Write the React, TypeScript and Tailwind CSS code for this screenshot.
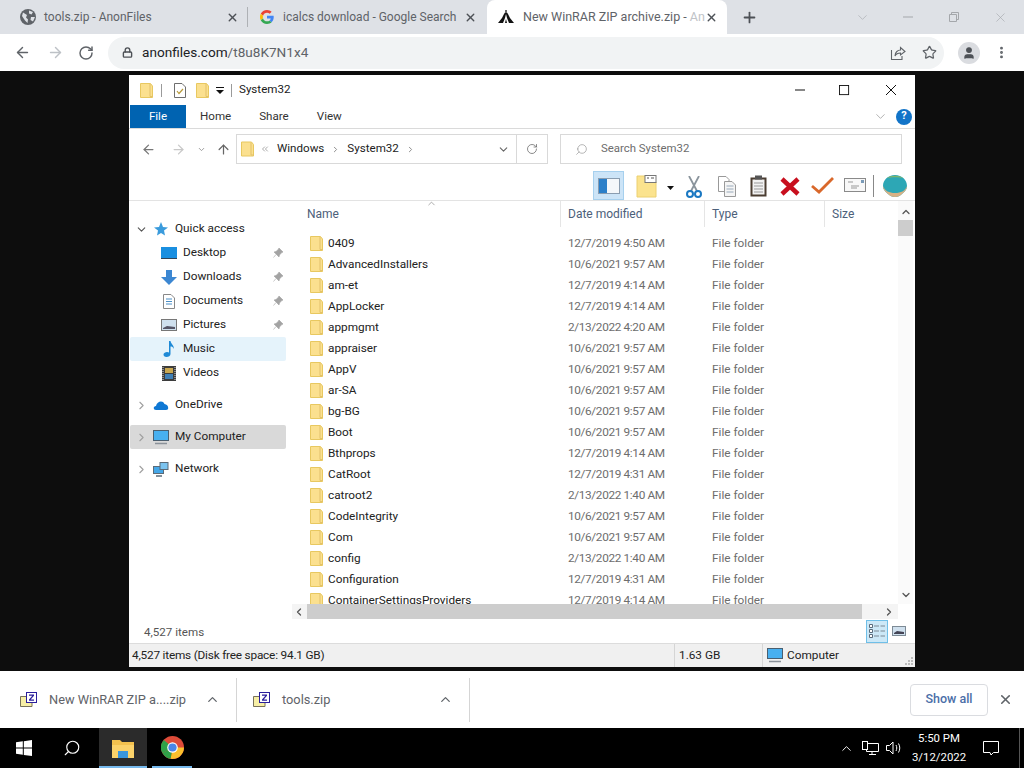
import React from 'react';
import {
  ArrowLeft,
  ArrowRight,
  ArrowUp,
  ChevronDown,
  ChevronLeft,
  ChevronRight,
  ChevronsLeft,
  ChevronUp,
  EllipsisVertical,
  Lock,
  Plus,
  RotateCw,
  Search,
  Star,
  User,
  X,
} from 'lucide-react';

const files = [
  ['0409', '12/7/2019 4:50 AM'],
  ['AdvancedInstallers', '10/6/2021 9:57 AM'],
  ['am-et', '12/7/2019 4:14 AM'],
  ['AppLocker', '12/7/2019 4:14 AM'],
  ['appmgmt', '2/13/2022 4:20 AM'],
  ['appraiser', '10/6/2021 9:57 AM'],
  ['AppV', '10/6/2021 9:57 AM'],
  ['ar-SA', '10/6/2021 9:57 AM'],
  ['bg-BG', '10/6/2021 9:57 AM'],
  ['Boot', '10/6/2021 9:57 AM'],
  ['Bthprops', '12/7/2019 4:14 AM'],
  ['CatRoot', '12/7/2019 4:31 AM'],
  ['catroot2', '2/13/2022 1:40 AM'],
  ['CodeIntegrity', '10/6/2021 9:57 AM'],
  ['Com', '10/6/2021 9:57 AM'],
  ['config', '2/13/2022 1:40 AM'],
  ['Configuration', '12/7/2019 4:31 AM'],
  ['ContainerSettingsProviders', '12/7/2019 4:14 AM'],
];

function Folder({ className = 'w-[13px] h-[15px]' }: { className?: string }) {
  return (
    <svg viewBox="0 0 13 15" className={className}>
      <path d="M0.5 0.5H10.5L12.5 3V14.5H0.5Z" fill="#fbe08f" stroke="#e8c860" />
      <path d="M10 1V13.5H12.5" fill="none" stroke="#e2c16a" />
    </svg>
  );
}

function GoogleG() {
  return (
    <svg viewBox="0 0 48 48" className="w-[14px] h-[14px]">
      <path fill="#ea4335" d="M24 9.5c3.5 0 6.7 1.3 9.1 3.5l6.8-6.8C35.8 2.4 30.3 0 24 0 14.6 0 6.5 5.4 2.6 13.2l7.9 6.2C12.4 13.7 17.7 9.5 24 9.5z" />
      <path fill="#4285f4" d="M47 24.5c0-1.6-.1-3.1-.4-4.5H24v9h12.9c-.6 3-2.2 5.5-4.7 7.2l7.3 5.7C43.9 37.8 47 31.7 47 24.5z" />
      <path fill="#fbbc05" d="M10.5 28.6c-.5-1.5-.8-3-.8-4.6s.3-3.1.8-4.6l-7.9-6.2C.9 16.5 0 20.1 0 24s.9 7.5 2.6 10.8z" />
      <path fill="#34a853" d="M24 48c6.5 0 11.9-2.1 15.9-5.8l-7.3-5.7c-2.2 1.5-5 2.3-8.6 2.3-6.3 0-11.6-4.2-13.5-9.9l-7.9 6.2C6.5 42.6 14.6 48 24 48z" />
    </svg>
  );
}

function Globe() {
  return (
    <svg viewBox="0 0 16 16" className="w-4 h-4">
      <circle cx="8" cy="8" r="8" fill="#5f6368" />
      <path d="M3 3.5 7 6 6 8.5 8 10.5 7.5 14 5 11.5 2 7ZM9 1.5 13 3 11.5 5.5 9 4.5ZM11 8H15L13 12.5 10.5 11Z" fill="#dee1e6" />
    </svg>
  );
}

function ArchiveTabIcon() {
  return (
    <svg viewBox="0 0 16 14" className="w-4 h-[14px]">
      <path d="M8 1 10 4 12 8 16 13H0L4 8 6 4Z" fill="#111" />
      <path d="M8 4 9 8 11 13H9L8 9 7 13H5L7 8Z" fill="#fff" />
      <path d="M7 0H9V3H7Z" fill="#666" />
    </svg>
  );
}

function ZipIcon() {
  return (
    <svg viewBox="0 0 17 16" className="w-[17px] h-4">
      <path d="M0.5 4.5H6L7 6H12V14.5H0.5Z" fill="#f7efa6" stroke="#77715a" />
      <rect x="6.5" y="0.5" width="10" height="10" fill="#fff" stroke="#2b1f9c" />
      <path d="M9 2.5H14V3.8L10.7 7.5H14V8.7H9V7.4L12.3 3.7H9Z" fill="#2b1f9c" />
    </svg>
  );
}

function ChromeTab({
  width,
  icon,
  children,
  active = false,
  divider = false,
}: {
  width: string;
  icon: React.ReactNode;
  children: React.ReactNode;
  active?: boolean;
  divider?: boolean;
}) {
  return (
    <div className={`${width} h-full flex items-center shrink-0 ${active ? 'bg-white rounded-t-[8px]' : ''}`}>
      <span className="w-4 flex justify-center shrink-0">{icon}</span>
      <span className={`${active ? 'ml-[9px] text-[12.5px]' : 'ml-[8px] text-[12px]'} flex-1 min-w-0 whitespace-nowrap text-[#5f6368]`}>
        {children}
      </span>
      <X size={13} strokeWidth={2.5} className="text-[#4d5156] shrink-0" />
      {divider && <span className="w-px h-5 bg-[#aeb1b5] ml-[8px]" />}
    </div>
  );
}

function ChromeBar() {
  return (
    <div className="shrink-0">
      <div className="h-[34px] bg-[#dee1e6] flex items-center">
        <div className="flex h-full">
          <ChromeTab width="w-[248px] pl-[20px]" icon={<Globe />} divider>tools.zip - AnonFiles</ChromeTab>
          <ChromeTab width="w-[230px] pl-[11px] pr-[1px]" icon={<GoogleG />}>icalcs download - Google Search</ChromeTab>
          <ChromeTab width="w-[240px] pl-[11px] pr-[9px] ml-[9px]" icon={<ArchiveTabIcon />} active>
            New WinRAR ZIP archive.zip - <span className="text-[#c0c3c7]">An</span>
          </ChromeTab>
        </div>
        <Plus size={17} strokeWidth={2.5} className="text-[#4d5156] ml-[14px]" />
        <div className="ml-auto flex items-center text-[#a4a7ab]">
          <ChevronDown size={15} strokeWidth={1} className="mr-[32px]" />
          <svg viewBox="0 0 12 12" className="w-3 h-3 mr-[34px]"><path d="M1 6H11" stroke="currentColor" fill="none" /></svg>
          <svg viewBox="0 0 12 12" className="w-3 h-3 mr-[33px]"><path d="M1.5 3.5H8.5V10.5H1.5ZM3.5 3.5V1.5H10.5V8.5H8.5" stroke="currentColor" fill="none" /></svg>
          <X size={15} strokeWidth={1} className="mr-[16px]" />
        </div>
      </div>
      <div className="h-[37px] bg-white flex items-center">
        <ArrowLeft size={17} strokeWidth={2} className="text-[#5f6368] ml-[14px]" />
        <ArrowRight size={17} strokeWidth={2} className="text-[#bdc1c6] ml-[16px]" />
        <RotateCw size={16} strokeWidth={2.2} className="text-[#5f6368] ml-[14px]" />
        <div className="ml-[14px] w-[836px] h-[32px] rounded-full bg-[#f1f3f4] flex items-center pl-[14px]">
          <Lock size={11} strokeWidth={3} className="text-[#4d5156]" />
          <span className="ml-[9px] text-[13.6px] leading-none text-[#202124]">
            anonfiles.com<span className="text-[#5f6368]">/t8u8K7N1x4</span>
          </span>
          <svg viewBox="0 0 16 16" className="w-4 h-4 ml-auto mr-[16px] text-[#5f6368]">
            <path d="M1.5 5V14.5H12V11M5 11C5 7 8 5 10.5 5V2.5L15 6.5 10.5 10V8C8 8 6 9 5 11Z" fill="none" stroke="currentColor" strokeWidth="1.1" />
          </svg>
          <Star size={15} strokeWidth={2} className="text-[#5f6368] mr-[7px]" />
        </div>
        <div className="ml-[14px] w-[22px] h-[22px] rounded-full bg-[#dadce0] flex items-center justify-center">
          <User size={14} fill="#4d5156" strokeWidth={2} className="text-[#4d5156]" />
        </div>
        <EllipsisVertical size={15} strokeWidth={2.6} className="text-[#5f6368] ml-[14px]" />
      </div>
    </div>
  );
}

function CheckDoc() {
  return (
    <svg viewBox="0 0 12 15" className="w-3 h-[15px]">
      <path d="M0.5 0.5H8L11.5 4V14.5H0.5Z" fill="#fff" stroke="#6e6e6e" />
      <path d="M3 8 5 10.5 9 6" fill="none" stroke="#b89a3a" strokeWidth="1.2" />
    </svg>
  );
}

function TitleBar() {
  return (
    <div className="h-[30px] flex items-center pl-[11px] text-[#1a1a1a]">
      <Folder className="w-[13px] h-[15px]" />
      <span className="w-px h-[13px] bg-[#9a9a9a] ml-[8px]" />
      <span className="ml-[12px] flex"><CheckDoc /></span>
      <span className="ml-[10px] flex"><Folder className="w-[13px] h-[15px]" /></span>
      <svg viewBox="0 0 8 7" className="w-2 h-[7px] ml-[7px]"><path d="M0 0H8V1H0ZM0 3H8L4 7Z" fill="#111" /></svg>
      <span className="w-px h-[13px] bg-[#9a9a9a] ml-[7px]" />
      <span className="ml-[7px] text-[11.6px]">System32</span>
      <svg viewBox="0 0 12 12" className="w-3 h-3 ml-auto mr-[33px]"><path d="M1 6H11" stroke="#111" /></svg>
      <svg viewBox="0 0 12 12" className="w-[11px] h-[11px] mr-[35px]"><rect x="0.5" y="0.5" width="10" height="10" fill="none" stroke="#111" /></svg>
      <svg viewBox="0 0 12 12" className="w-3 h-3 mr-[18px]"><path d="M1 1 11 11M11 1 1 11" stroke="#111" /></svg>
    </div>
  );
}

function RibbonTabs() {
  return (
    <div className="h-[24px] flex items-stretch text-[11.6px] border-b border-[#dadada]">
      <div className="w-[56px] ml-px bg-[#0063b1] text-white flex items-center justify-center">File</div>
      <span className="ml-[14px] self-center text-[#333]">Home</span>
      <span className="ml-[28px] self-center text-[#333]">Share</span>
      <span className="ml-[28px] self-center text-[#333]">View</span>
      <ChevronDown size={15} strokeWidth={1.2} className="ml-auto mr-[8px] self-center text-[#9a9a9a]" />
      <span className="mr-[3px] w-4 h-4 rounded-full bg-[#1274c8] text-white text-[11px] font-bold flex items-center justify-center self-center">?</span>
    </div>
  );
}

function AddressRow() {
  return (
    <div className="h-[41px] pt-[5px] flex items-start">
      <ArrowLeft size={15} strokeWidth={2} className="mt-[8px] ml-[12px] text-[#777]" />
      <ArrowRight size={15} strokeWidth={2} className="mt-[8px] ml-[15px] text-[#c8c8c8]" />
      <ChevronDown size={9} strokeWidth={2.5} className="mt-[11px] ml-[11px] text-[#999]" />
      <ArrowUp size={15} strokeWidth={2} className="mt-[8px] ml-[10px] text-[#666]" />
      <div className="ml-[5px] w-[312px] h-[30px] border border-[#d9d9d9] flex items-center text-[11.6px] text-[#222]">
        <span className="ml-[4px] flex"><Folder className="w-[13px] h-[16px]" /></span>
        <ChevronsLeft size={10} strokeWidth={1.5} className="ml-[6px] text-[#777]" />
        <span className="ml-[7px]">Windows</span>
        <ChevronRight size={9} strokeWidth={2.5} className="mx-[7px] text-[#888]" />
        <span>System32</span>
        <ChevronRight size={9} strokeWidth={2.5} className="ml-[7px] text-[#888]" />
        <ChevronDown size={13} strokeWidth={2} className="ml-auto mr-[6px] text-[#666]" />
        <span className="w-px h-full bg-[#d9d9d9]" />
        <RotateCw size={12} strokeWidth={1.5} className="mx-[9px] text-[#666]" />
      </div>
      <div className="ml-[12px] w-[342px] h-[30px] border border-[#d9d9d9] flex items-center text-[11.4px] text-[#6d6d6d]">
        <Search size={13} strokeWidth={1.3} className="ml-[14px] text-[#999] -scale-x-100" />
        <span className="ml-[13px]">Search System32</span>
      </div>
    </div>
  );
}

function Toolbar() {
  return (
    <div className="h-[31px] flex items-end pl-[464px] border-b border-[#e3e3e3]">
      <div className="w-[31px] h-[29px] bg-[#cce4f7] border border-[#a6d0ee] flex items-center justify-center">
        <div className="w-[22px] h-[16px] flex border border-[#8a9db0]">
          <span className="w-[8px] bg-[#2b7fc9]" />
          <span className="flex-1 bg-[#f4f7fa]" />
        </div>
      </div>
      <div className="ml-[12px] mb-[2px] self-end">
        <svg viewBox="0 0 21 23" className="w-[21px] h-[23px] block">
          <path d="M1 1H14L20 7V22H1Z" fill="#fbe38e" stroke="#ecd070" />
          <rect x="9" y="0.5" width="11" height="7" fill="#fff" stroke="#777" />
          <path d="M11 3H13M15 3H18" stroke="#555" />
        </svg>
      </div>
      <svg viewBox="0 0 7 4" className="w-[7px] h-[4px] ml-[10px] mb-[10px]"><path d="M0 0H7L3.5 4Z" fill="#111" /></svg>
      <svg viewBox="0 0 16 23" className="w-4 h-[23px] ml-[12px] mb-px">
        <path d="M3 0 11 15M13 0 5 15" stroke="#8a949c" strokeWidth="1.8" />
        <circle cx="4" cy="18" r="3" fill="none" stroke="#1a78c2" strokeWidth="2" />
        <circle cx="12" cy="18" r="3" fill="none" stroke="#1a78c2" strokeWidth="2" />
      </svg>
      <svg viewBox="0 0 18 21" className="w-[18px] h-[21px] ml-[16px] mb-[3px]">
        <path d="M0.5 0.5H8L11 3.5V15.5H0.5Z" fill="#fff" stroke="#999" />
        <path d="M6.5 5.5H14L17.5 9V20.5H6.5Z" fill="#f5f5f5" stroke="#999" />
        <path d="M8.5 10H15.5M8.5 13H15.5M8.5 16H15.5" stroke="#9ab" />
      </svg>
      <svg viewBox="0 0 17 22" className="w-[17px] h-[22px] ml-[14px] mb-[3px]">
        <rect x="0.5" y="2.5" width="16" height="19" fill="#4a3d31" />
        <rect x="2.5" y="4.5" width="12" height="15" fill="#f2f2f2" />
        <rect x="5" y="0.5" width="7" height="4" fill="#555" />
        <path d="M4 8H13M4 11H13M4 14H13M4 17H13" stroke="#999" />
      </svg>
      <svg viewBox="0 0 20 19" className="w-5 h-[19px] ml-[13px] mb-[4px]">
        <path d="M2 2 18 17M18 2 2 17" stroke="#c80f1e" strokeWidth="4.5" />
      </svg>
      <svg viewBox="0 0 23 17" className="w-[23px] h-[17px] ml-[11px] mb-[6px]">
        <path d="M1 9 8 15 22 1" fill="none" stroke="#d9682b" strokeWidth="2.8" />
      </svg>
      <svg viewBox="0 0 22 14" className="w-[22px] h-[14px] ml-[10px] mb-[8px]">
        <rect x="0.5" y="0.5" width="21" height="13" fill="#f8f8f8" stroke="#8a8a8a" />
        <path d="M4 4H9M7 8H15M7 10H13" stroke="#999" />
        <rect x="17" y="2" width="3" height="3" fill="#7a9bb8" />
      </svg>
      <span className="w-px h-[22px] bg-[#888] ml-[7px] mb-[3px]" />
      <svg viewBox="0 0 24 22" className="w-[24px] h-[22px] ml-[9px] mb-[3px]">
        <path d="M12 0C19 0 24 5 24 11 24 15 21 17 19 19 17 21 15 22 12 22 9 22 7 21 5 19 3 17 0 15 0 11 0 5 5 0 12 0Z" fill="#2da7b5" />
        <path d="M4 3C8 0 16 0 20 3 16 2 8 2 4 3Z" fill="#7fb56b" />
        <path d="M0 11C0 15 3 17 5 19 7 21 9 22 12 22 15 22 17 21 19 19 21 17 24 15 24 11 22 16 18 18 12 18 6 18 2 16 0 11Z" fill="#d9b184" />
      </svg>
    </div>
  );
}

function NavRow({
  label,
  icon,
  chevron,
  indent = false,
  pinned = false,
  bg = '',
  gapAfter = false,
}: {
  label: string;
  icon: React.ReactNode;
  chevron?: 'down' | 'right';
  indent?: boolean;
  pinned?: boolean;
  bg?: string;
  gapAfter?: boolean;
}) {
  return (
    <div className={`h-[24px] flex items-center rounded-[2px] ${bg} ${gapAfter ? 'mb-[8px]' : ''}`}>
      <span className="w-[18px] flex justify-end">
        {chevron === 'down' && <ChevronDown size={13} strokeWidth={2} className="text-[#555]" />}
        {chevron === 'right' && <ChevronRight size={13} strokeWidth={2} className="text-[#a0a0a0]" />}
      </span>
      <span className={`${indent ? 'w-[16px] ml-[13px]' : 'w-[16px] ml-[5px]'} flex justify-center`}>{icon}</span>
      <span className="ml-[6px] text-[11.8px] text-[#222]">{label}</span>
      {pinned && (
        <svg viewBox="0 0 10 10" className="w-[10px] h-[10px] ml-auto mr-[3px]">
          <path d="M6 0 10 4 8.5 4.8 6.5 7 6 9 1 4 3 3.5 5.2 1.5ZM3 6.5 0.5 9.5" fill="#a3a3a3" stroke="#a3a3a3" strokeWidth="0.6" />
        </svg>
      )}
    </div>
  );
}

function Sidebar() {
  return (
    <div className="w-[156px] ml-px pt-[16px] shrink-0">
      <NavRow
        label="Quick access"
        chevron="down"
        icon={<svg viewBox="0 0 14 14" className="w-[14px] h-[14px]"><path d="M7 0 9 5 14 5.5 10 8.5 11 13.5 7 11 3 13.5 4 8.5 0 5.5 5 5Z" fill="#3a9bdc" /></svg>}
      />
      <NavRow
        label="Desktop"
        indent
        pinned
        icon={<svg viewBox="0 0 16 12" className="w-4 h-3"><rect width="16" height="12" fill="#1a8fe0" /><path d="M0 11.5H16" stroke="#345" /></svg>}
      />
      <NavRow
        label="Downloads"
        indent
        pinned
        icon={<svg viewBox="0 0 16 15" className="w-4 h-[15px]"><path d="M5 0H11V7H16L8 15 0 7H5Z" fill="#3c87d2" /></svg>}
      />
      <NavRow
        label="Documents"
        indent
        pinned
        icon={<svg viewBox="0 0 12 15" className="w-3 h-[15px]"><path d="M0.5 0.5H8L11.5 4V14.5H0.5Z" fill="#fff" stroke="#888" /><path d="M3 5H9M3 7.5H9M3 10H9" stroke="#4a8fc7" /></svg>}
      />
      <NavRow
        label="Pictures"
        indent
        pinned
        icon={<svg viewBox="0 0 16 12" className="w-4 h-3"><rect x="0.5" y="0.5" width="15" height="11" fill="#cfe0ee" stroke="#777" /><path d="M2 9 6 7 14 8V10H2Z" fill="#556" /></svg>}
      />
      <NavRow
        label="Music"
        indent
        bg="bg-[#e5f3fb]"
        icon={<svg viewBox="0 0 12 16" className="w-3 h-4"><path d="M6 0H7.5C8 3 11 4 11 8 10 6 9 5.5 7.5 5.5V13C7.5 15 5.5 16 3.5 16 1.5 16 0.5 15 0.5 13.5S2.5 11 4 11C5 11 5.5 11.2 6 11.5Z" fill="#1f8ad6" /></svg>}
      />
      <NavRow
        label="Videos"
        indent
        gapAfter
        icon={<svg viewBox="0 0 14 15" className="w-[14px] h-[15px]"><rect width="14" height="15" fill="#3c3c3c" /><path d="M3 2H11V7H3Z" fill="#c9a850" /><path d="M3 8H11V13H3Z" fill="#3f7fb5" /><path d="M1 1V14M13 1V14" stroke="#ddd" strokeDasharray="1 1" /></svg>}
      />
      <NavRow
        label="OneDrive"
        chevron="right"
        gapAfter
        icon={<svg viewBox="0 0 16 10" className="w-4 h-[10px]"><path d="M3 10C0 10 0 6 3 6 4 1 10 0 11.5 4 15 4 17 10 13 10Z" fill="#0f78d4" /></svg>}
      />
      <NavRow
        label="My Computer"
        chevron="right"
        bg="bg-[#d9d9d9]"
        gapAfter
        icon={<svg viewBox="0 0 16 15" className="w-4 h-[15px]"><rect x="0.5" y="0.5" width="15" height="10" fill="#48b0f0" stroke="#4a5f70" /><path d="M2 13.5H14" stroke="#8a9199" strokeWidth="1.5" /></svg>}
      />
      <NavRow
        label="Network"
        chevron="right"
        icon={<svg viewBox="0 0 16 15" className="w-4 h-[15px]"><rect x="0.5" y="4.5" width="10" height="7" fill="#45a7e8" stroke="#5b6b78" /><rect x="7" y="0.5" width="8" height="7" fill="#7cc4f0" stroke="#5b6b78" /><path d="M3 14H9" stroke="#5b6b78" strokeWidth="1.5" /></svg>}
      />
    </div>
  );
}

function FileList() {
  return (
    <div className="flex-1 min-w-0 flex flex-col">
      <div className="flex-1 min-h-0 flex">
        <div className="flex-1 min-w-0 flex flex-col relative">
          <ChevronUp size={11} strokeWidth={1.5} className="absolute left-[134px] -top-[3px] text-[#888]" />
          <div className="h-[32px] shrink-0 grid grid-cols-[269px_144px_120px_1fr] text-[12px] text-[#4c607a]">
            <span className="pl-[15px] pt-[4px] border-r border-[#e5e5e5] h-[26px]">Name</span>
            <span className="pl-[7px] pt-[4px] border-r border-[#e5e5e5] h-[26px]">Date modified</span>
            <span className="pl-[7px] pt-[4px] border-r border-[#e5e5e5] h-[26px]">Type</span>
            <span className="pl-[7px] pt-[4px]">Size</span>
          </div>
          <div className="flex-1 min-h-0 overflow-hidden text-[11.8px]">
            {files.map(([name, date]) => (
              <div key={name} className="h-[21px] grid grid-cols-[269px_144px_1fr] items-center">
                <span className="pl-[18px] flex items-center text-[#222] whitespace-nowrap">
                  <Folder />
                  <span className="ml-[5px]">{name}</span>
                </span>
                <span className="pl-[7px] text-[#6d6d6d] tracking-[-0.35px]">{date}</span>
                <span className="pl-[7px] text-[#6d6d6d]">File folder</span>
              </div>
            ))}
          </div>
        </div>
        <div className="w-[15px] mr-[2px] shrink-0 flex flex-col items-center bg-[#fafafa]">
          <ChevronUp size={12} strokeWidth={2.5} className="mt-[5px] text-[#555]" />
          <div className="w-full h-[16px] mt-[2px] bg-[#cdcdcd]" />
          <ChevronDown size={12} strokeWidth={2.5} className="mt-auto mb-[3px] text-[#555]" />
        </div>
      </div>
      <div className="h-[15px] shrink-0 flex items-center mr-[17px] bg-[#f4f4f4]">
        <ChevronLeft size={12} strokeWidth={2.5} className="ml-[1px] text-[#555]" />
        <div className="w-[555px] h-full bg-[#cdcdcd] ml-[2px]" />
        <ChevronRight size={12} strokeWidth={2.5} className="ml-auto mr-[3px] text-[#555]" />
      </div>
    </div>
  );
}

function StatusBars() {
  return (
    <>
      <div className="h-[24px] shrink-0 flex items-center text-[11.6px] text-[#555] pl-[15px]">
        <span className="pt-[3px]">4,527 items</span>
        <div className="ml-auto w-[22px] h-[23px] bg-[#cce8f7] border border-[#6fbfe8] flex items-center justify-center">
          <svg viewBox="0 0 16 14" className="w-4 h-[14px]">
            <path d="M0.5 0.5H3.5V3.5H0.5ZM0.5 5.5H3.5V8.5H0.5ZM0.5 10.5H3.5V13.5H0.5Z" fill="#fff" stroke="#5a6b7b" />
            <path d="M5 2H10M11.5 2H16M5 7H10M11.5 7H16M5 12H10M11.5 12H16" stroke="#7a8894" />
          </svg>
        </div>
        <svg viewBox="0 0 14 10" className="w-[14px] h-[10px] ml-[4px] mr-[9px]"><rect x="0.5" y="0.5" width="13" height="9" fill="#cfe0ee" stroke="#7d8a95" /><path d="M2 7 5 5 12 6V8H2Z" fill="#445" /></svg>
      </div>
      <div className="h-[24px] shrink-0 bg-[#f0f0f0] border-t border-[#dcdcdc] flex items-center text-[11.8px] text-[#222]">
        <span className="w-[545px] pl-[3px] tracking-[-0.2px]">4,527 items (Disk free space: 94.1 GB)</span>
        <span className="w-[88px] h-full border-l border-[#d5d5d5] pl-[4px] flex items-center">1.63 GB</span>
        <span className="flex-1 h-full border-l border-[#d5d5d5] pl-[4px] flex items-center">
          <svg viewBox="0 0 16 15" className="w-4 h-[15px]"><rect x="0.5" y="0.5" width="15" height="10" fill="#48b0f0" stroke="#4a5f70" /><path d="M2 13.5H14" stroke="#8a9199" strokeWidth="1.5" /></svg>
          <span className="ml-[4px]">Computer</span>
          <svg viewBox="0 0 8 8" className="w-2 h-2 ml-auto mr-[2px] self-end mb-[2px]"><path d="M6 0H8V2H6ZM3 3H5V5H3ZM6 3H8V5H6ZM0 6H2V8H0ZM3 6H5V8H3ZM6 6H8V8H6Z" fill="#bbb" /></svg>
        </span>
      </div>
    </>
  );
}

function ExplorerWindow() {
  return (
    <div className="ml-[129px] mt-[4px] w-[786px] h-[592px] bg-white flex flex-col overflow-hidden">
      <TitleBar />
      <RibbonTabs />
      <AddressRow />
      <Toolbar />
      <div className="flex-1 min-h-0 flex">
        <Sidebar />
        <div className="w-[6px]" />
        <FileList />
      </div>
      <StatusBars />
    </div>
  );
}

function DownloadShelf() {
  return (
    <div className="h-[57px] shrink-0 bg-white flex items-center text-[12.8px] text-[#5f6368]">
      <div className="w-[237px] h-[44px] pl-[20px] pr-[16px] flex items-center border-r border-[#d5d5d5]">
        <ZipIcon />
        <span className="ml-[12px]">New WinRAR ZIP a....zip</span>
        <ChevronUp size={15} strokeWidth={2} className="ml-auto" />
      </div>
      <div className="w-[233px] h-[44px] pl-[16px] pr-[16px] flex items-center border-r border-[#d5d5d5]">
        <ZipIcon />
        <span className="ml-[12px]">tools.zip</span>
        <ChevronUp size={15} strokeWidth={2} className="ml-auto" />
      </div>
      <div className="ml-auto w-[78px] h-[32px] rounded-[4px] border border-[#dadce0] flex items-center justify-center text-[#4b6ea8] text-[12.5px] font-medium">
        Show all
      </div>
      <X size={15} strokeWidth={2.5} className="ml-[10px] mr-[11px] text-[#5f6368]" />
    </div>
  );
}

function Taskbar() {
  return (
    <div className="h-[40px] shrink-0 bg-black flex items-stretch text-white">
      <div className="w-[48px] flex items-center justify-center">
        <svg viewBox="0 0 16 16" className="w-4 h-4"><path d="M0 2.3 6.8 1.3V7.6H0ZM7.8 1.2 16 0V7.6H7.8ZM0 8.5H6.8V14.8L0 13.8ZM7.8 8.5H16V16L7.8 14.9Z" fill="#fff" /></svg>
      </div>
      <div className="w-[48px] mr-[3px] flex items-center justify-center">
        <Search size={18} strokeWidth={1.5} className="-scale-x-100" />
      </div>
      <div className="w-[48px] bg-[#2b2b2b] flex flex-col items-center justify-end border-b-2 border-[#76b9ed]">
        <svg viewBox="0 0 22 18" className="w-[22px] h-[18px] mb-[8px]">
          <path d="M0 0H8L10 2H22V18H0Z" fill="#f3c14e" />
          <path d="M0 5H22V18H16V11H6V18H0Z" fill="#fbd26a" />
          <path d="M6 11H16V18H6Z" fill="#3a96dd" />
        </svg>
      </div>
      <div className="w-[40px] ml-[5px] flex items-center justify-center border-b-2 border-[#76b9ed]">
        <svg viewBox="0 0 24 24" className="w-[23px] h-[23px]">
          <circle cx="12" cy="12" r="12" fill="#dd4b39" />
          <path d="M12 12 1.6 18A12 12 0 0 1 3 4.2Z" fill="#2fa149" />
          <path d="M12 12H24A12 12 0 0 1 10 23.8Z" fill="#fbc02d" />
          <path d="M1.6 18 12 12 10 23.8A12 12 0 0 1 1.6 18Z" fill="#2fa149" />
          <circle cx="12" cy="12" r="5.5" fill="#fff" />
          <circle cx="12" cy="12" r="4.3" fill="#4a86e8" />
        </svg>
      </div>
      <div className="ml-auto flex items-center">
        <ChevronUp size={15} strokeWidth={1.5} className="mr-[8px]" />
        <svg viewBox="0 0 17 14" className="w-[17px] h-[14px] mr-[7px]"><path d="M4.5 2.5H16.5V10.5H4.5ZM10 10.5V13M7 13.5H14" fill="none" stroke="#fff" /><rect x="0.5" y="0.5" width="5" height="8" fill="#000" stroke="#fff" /></svg>
        <svg viewBox="0 0 17 14" className="w-[17px] h-[14px]"><path d="M0.5 4.5H3.5L7 1V13L3.5 9.5H0.5ZM10 4C11 6 11 8 10 10M12.5 2.5C14.2 5.5 14.2 8.5 12.5 11.5" fill="none" stroke="#fff" /></svg>
        <div className="w-[72px] text-[11.4px] leading-[19px] text-center">
          <div>5:50 PM</div>
          <div>3/12/2022</div>
        </div>
        <svg viewBox="0 0 16 16" className="w-4 h-4 ml-[8px] mr-[20px]"><path d="M0.5 1.5H15.5V12.5H10.5L8 15 7 12.5H0.5Z" fill="none" stroke="#fff" /></svg>
        <span className="w-px h-full bg-[#555] mr-[4px]" />
      </div>
    </div>
  );
}

export default function App() {
  return (
    <div className="w-[1024px] h-[768px] flex flex-col overflow-hidden bg-[#0d0d0d]" style={{ fontFamily: 'Roboto, sans-serif' }}>
      <ChromeBar />
      <div className="flex-1 min-h-0 bg-[#0d0d0d]">
        <ExplorerWindow />
      </div>
      <DownloadShelf />
      <Taskbar />
    </div>
  );
}
